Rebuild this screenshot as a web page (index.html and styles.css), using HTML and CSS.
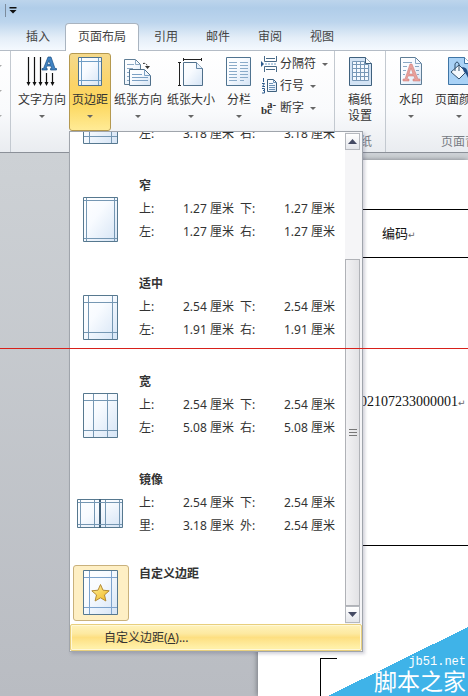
FILE: index.html
```
<!DOCTYPE html>
<html lang="zh-CN">
<head>
    <meta charset="UTF-8">
    <meta name="viewport" content="width=device-width, initial-scale=1.0">
    <title>页面布局</title>
    <link rel="stylesheet" href="styles.css">
</head>
<body>
    <svg class="defs" width="0" height="0" aria-hidden="true">
        <defs>
            <linearGradient id="paper" x1="0" y1="0" x2="1" y2="1">
                <stop offset="0" stop-color="#ffffff"/>
                <stop offset="0.4" stop-color="#f8fbff"/>
                <stop offset="1" stop-color="#d5e4f5"/>
            </linearGradient>
            <linearGradient id="star" x1="0" y1="0" x2="1" y2="1">
                <stop offset="0" stop-color="#fff3a0"/>
                <stop offset="1" stop-color="#f0b51c"/>
            </linearGradient>
        </defs>
    </svg>

    <header class="titlebar">
        <div class="quick-access">
            <button class="quick-more" type="button" aria-label="自定义快速访问工具栏">
                <svg width="8" height="8" viewBox="0 0 8 8"><path d="M0.5 0h7v1.5h-7zM0.5 3h7L4 6.5z" fill="#111"/></svg>
            </button>
        </div>
        <nav class="tabs">
            <a href="#" class="tab">插入</a>
            <a href="#" class="tab active">页面布局</a>
            <a href="#" class="tab">引用</a>
            <a href="#" class="tab">邮件</a>
            <a href="#" class="tab">审阅</a>
            <a href="#" class="tab">视图</a>
        </nav>
    </header>

    <section class="ribbon">
        <div class="group themes">
            <span class="arrow"></span>
            <span class="arrow"></span>
            <span class="arrow"></span>
        </div>

        <div class="group page-setup">
            <div class="tools">
                <button class="tool" type="button">
                    <svg width="32" height="32" viewBox="0 0 32 32">
                        <path d="M2.500 1v27M8.500 1v27M14.500 1v27M20.500 17v11M26.500 17v11" stroke="#111" stroke-width="1.200"/>
                        <path d="M.5 26h4l-2 4zM6.500 26h4l-2 4zM12.500 26h4l-2 4zM18.500 26h4l-2 4zM24.500 26h4l-2 4z" fill="#111"/>
                        <path d="M22 1h3l4 11.500h1.500V14h-6v-1.500h1.200l-.8-2.500h-4l-.9 2.500h1.200V14H16v-1.500h1.500zM22.900 4.500l-1.500 4h3z" fill="#3f83c4" stroke="#1b4f82" stroke-width=".7"/>
                    </svg>
                    <span>文字方向</span>
                    <span class="arrow"></span>
                </button>
                <div class="dropdown">
                    <button class="tool narrow open" type="button" aria-expanded="true">
                        <svg width="32" height="32" viewBox="0 0 32 32">
                            <path d="M4.500 1.500h23v28h-23z" fill="url(#paper)" stroke="#4f7390"/>
                            <path d="M7.500 2v27M24.500 2v27M5 5.500h22M5 24.500h22" stroke="#6f9ec6"/>
                        </svg>
                        <span>页边距</span>
                        <span class="arrow"></span>
                    </button>

                    <div class="menu">
                        <div class="gallery">
                            <div class="presets">
                                <button class="preset partial" type="button">
                                    <span class="thumb">
                                        <svg width="36" height="46" viewBox="0 0 36 46">
                                            <path d="M.5.5h34v44H.5z" fill="url(#paper)" stroke="#56788f"/>
                                            <path d="M6.500 1v43M28.500 1v43M1 7.500h33M1 37.500h33" stroke="#7597b3"/>
                                        </svg>
                                    </span>
                                    <span class="info">
                                        <span>左:</span><span>3.18 厘米</span><span>右:</span><span>3.18 厘米</span>
                                    </span>
                                </button>
                                <button class="preset" type="button">
                                    <span class="thumb">
                                        <svg width="36" height="46" viewBox="0 0 36 46">
                                            <path d="M.5.5h34v44H.5z" fill="url(#paper)" stroke="#56788f"/>
                                            <path d="M3.500 1v43M31.500 1v43M1 3.500h33M1 41.500h33" stroke="#7597b3"/>
                                        </svg>
                                    </span>
                                    <span class="info">
                                        <strong>窄</strong>
                                        <span>上:</span><span>1.27 厘米</span><span>下:</span><span>1.27 厘米</span>
                                        <span>左:</span><span>1.27 厘米</span><span>右:</span><span>1.27 厘米</span>
                                    </span>
                                </button>
                                <button class="preset" type="button">
                                    <span class="thumb">
                                        <svg width="36" height="46" viewBox="0 0 36 46">
                                            <path d="M.5.5h34v44H.5z" fill="url(#paper)" stroke="#56788f"/>
                                            <path d="M5.500 1v43M29.500 1v43M1 7.500h33M1 37.500h33" stroke="#7597b3"/>
                                        </svg>
                                    </span>
                                    <span class="info">
                                        <strong>适中</strong>
                                        <span>上:</span><span>2.54 厘米</span><span>下:</span><span>2.54 厘米</span>
                                        <span>左:</span><span>1.91 厘米</span><span>右:</span><span>1.91 厘米</span>
                                    </span>
                                </button>
                                <button class="preset" type="button">
                                    <span class="thumb">
                                        <svg width="36" height="46" viewBox="0 0 36 46">
                                            <path d="M.5.5h34v44H.5z" fill="url(#paper)" stroke="#56788f"/>
                                            <path d="M10.500 1v43M24.500 1v43M1 7.500h33M1 37.500h33" stroke="#7597b3"/>
                                        </svg>
                                    </span>
                                    <span class="info">
                                        <strong>宽</strong>
                                        <span>上:</span><span>2.54 厘米</span><span>下:</span><span>2.54 厘米</span>
                                        <span>左:</span><span>5.08 厘米</span><span>右:</span><span>5.08 厘米</span>
                                    </span>
                                </button>
                                <button class="preset mirror" type="button">
                                    <span class="thumb">
                                        <svg width="48" height="30" viewBox="1 0 48 30">
                                            <path d="M1.500.5h22v28h-22zM24.500.5h22v28h-22z" fill="url(#paper)" stroke="#56788f"/>
                                            <path d="M24 0v29" stroke="#3f5f78" stroke-width="2"/>
                                            <path d="M4.500 1v27M18.500 1v27M29.500 1v27M43.500 1v27M2 3.500h44M2 25.500h44" stroke="#7597b3"/>
                                        </svg>
                                    </span>
                                    <span class="info">
                                        <strong>镜像</strong>
                                        <span>上:</span><span>2.54 厘米</span><span>下:</span><span>2.54 厘米</span>
                                        <span>里:</span><span>3.18 厘米</span><span>外:</span><span>2.54 厘米</span>
                                    </span>
                                </button>
                                <button class="preset custom" type="button">
                                    <span class="thumb">
                                        <svg width="36" height="46" viewBox="0 0 36 46">
                                            <path d="M.5.5h34v44H.5z" fill="url(#paper)" stroke="#56788f"/>
                                            <path d="M6.500 1v43M28.500 1v43M1 7.500h33M1 37.500h33" stroke="#7da3cc"/>
                                            <path d="M17.500 14.500l2.500 5.700 6.200.6-4.700 4.100 1.400 6.100-5.400-3.200-5.400 3.200 1.400-6.100-4.700-4.100 6.200-.6z" fill="url(#star)" stroke="#b38a35"/>
                                        </svg>
                                    </span>
                                    <span class="info"><strong>自定义边距</strong></span>
                                </button>
                            </div>
                            <div class="scrollbar">
                                <button class="scroll-btn" type="button" aria-label="向上滚动"><svg width="9" height="5" viewBox="0 0 9 5"><path d="M0 5h9L4.500 0z" fill="#444a63"/></svg></button>
                                <div class="track"><div class="grip"><i></i><i></i><i></i></div></div>
                                <button class="scroll-btn" type="button" aria-label="向下滚动"><svg width="9" height="5" viewBox="0 0 9 5"><path d="M0 0h9L4.500 5z" fill="#444a63"/></svg></button>
                            </div>
                        </div>
                        <button class="menu-item" type="button">自定义边距(<u>A</u>)...</button>
                    </div>
                </div>
                <button class="tool" type="button">
                    <svg width="32" height="32" viewBox="0 0 32 32">
                        <path d="M2.500 3.500h11l5 5v20h-16z" fill="url(#paper)" stroke="#5f7d95"/>
                        <path d="M13.500 3.500v5h5M5 8.500h7M5 12.500h6M5 16.500h3M5 20.500h3M5 24.500h3" fill="none" stroke="#8aa8c4"/>
                        <path d="M7.500 13.500h15l6 6v10h-21z" fill="url(#paper)" stroke="#4f6f8a"/>
                        <path d="M22.500 13.500v6h6M10 18.500h10M10 21.500h16M10 24.500h16" fill="none" stroke="#7ba0c4"/>
                        <path d="M21 7.500q4-1 4.500 4" fill="none" stroke="#333" stroke-dasharray="2 1"/>
                        <path d="M23 10h5l-2.500 3z" fill="#333"/>
                    </svg>
                    <span>纸张方向</span>
                    <span class="arrow"></span>
                </button>
                <button class="tool" type="button">
                    <svg width="32" height="32" viewBox="0 0 32 32">
                        <path d="M8.500 6.500h13l6 6v17h-19z" fill="url(#paper)" stroke="#4f6f8a"/>
                        <path d="M21.500 6.500v6h6" fill="#e8f1fb" stroke="#6285a5"/>
                        <path d="M8 3.500h19M8.500 2v3M26.500 2v3M4.500 7v22M3 6.500h3M3 29.500h3" stroke="#222"/>
                    </svg>
                    <span>纸张大小</span>
                    <span class="arrow"></span>
                </button>
                <button class="tool narrow" type="button">
                    <svg width="32" height="32" viewBox="0 0 32 32">
                        <path d="M3.500 1.500h24v28h-24z" fill="url(#paper)" stroke="#4f7390"/>
                        <path d="M6 6.500h8M6 9.500h8M6 12.500h8M6 15.500h8M6 18.500h8M6 21.500h8M6 24.500h8M17 6.500h8M17 9.500h8M17 12.500h8M17 15.500h8M17 18.500h8M17 21.500h8M17 24.500h4" stroke="#8aabc9"/>
                    </svg>
                    <span>分栏</span>
                    <span class="arrow"></span>
                </button>
                <div class="small-tools">
                    <button class="small-tool" type="button">
                        <svg width="16" height="16" viewBox="0 0 16 16">
                            <path d="M0 5l3 3-3 3z" fill="#2c5a8c"/>
                            <path d="M3.500 0v5.500h12V0M3.500 16v-5.500h12V16M5 2.500h9M5 13.500h9" fill="none" stroke="#496b88"/>
                            <path d="M4 8h12" stroke="#6f9ec6" stroke-dasharray="2 1"/>
                        </svg>
                        <span>分隔符</span><span class="arrow"></span>
                    </button>
                    <button class="small-tool" type="button">
                        <svg width="16" height="16" viewBox="0 0 16 16">
                            <path d="M6.500 1.500h6l3 3v9h-9z" fill="url(#paper)" stroke="#3f617e"/>
                            <path d="M12.500 1.500v3h3M8 5.500h4M8 7.500h6M8 9.500h6M8 11.500h6" fill="none" stroke="#6b91b5"/>
                            <path d="M2.500 0v4M1 5.500h2.500l-2 3h2.500M1 10.500h2.500v2H2M3.500 12.500v2.500H1" fill="none" stroke="#2c5a8c"/>
                        </svg>
                        <span>行号</span><span class="arrow"></span>
                    </button>
                    <button class="small-tool" type="button">
                        <svg class="hyphen" width="16" height="16" viewBox="0 0 16 16"><text x="0" y="14">bc</text><text x="6" y="8">a-</text></svg>
                        <span>断字</span><span class="arrow"></span>
                    </button>
                </div>
            </div>
        </div>

        <div class="group manuscript">
            <div class="tools">
                <button class="tool narrow" type="button">
                    <svg width="32" height="32" viewBox="0 0 32 32">
                        <path d="M5.500 1.500h16l6 6v22h-22z" fill="#d3e3f4" stroke="#3f617e"/>
                        <path d="M8.500 5.500h12v3h4v16h-16zM8 8.500h16M8 12.500h16M8 16.500h16M8 20.500h16M12.500 6v19M16.500 6v19M20.500 6v19" fill="#f4f9ff" stroke="#7898b7"/>
                        <path d="M21.500 1.500v6h6" fill="#fff" stroke="#3f617e"/>
                    </svg>
                    <span>稿纸<br>设置</span>
                </button>
            </div>
            <div class="group-label">稿纸</div>
        </div>

        <div class="group background">
            <div class="tools">
                <button class="tool narrow" type="button">
                    <svg width="32" height="32" viewBox="0 0 32 32">
                        <path d="M5.500 1.500h15l6 6v21h-21z" fill="url(#paper)" stroke="#5f7d95"/>
                        <path d="M20.500 1.500v6h6M8 6.500h9M8 10.500h4M20 10.500h4M8 14.500h3M21 14.500h3M8 18.500h2M22 18.500h2" fill="none" stroke="#8aa8c4"/>
                        <path d="M15 8h2l6 15h2v2h-7v-2h2l-1-3h-6l-1 3h2v2H8v-2h2zM16 12l-2 6h4z" fill="#e8a09b" stroke="#cf7670" stroke-width=".5"/>
                    </svg>
                    <span>水印</span>
                    <span class="arrow"></span>
                </button>
                <button class="tool" type="button">
                    <svg width="32" height="32" viewBox="0 0 32 32">
                        <path d="M5.500 1.500h16l6 6v21h-22z" fill="#a9d2f6" stroke="#3f75a5"/>
                        <path d="M21.500 1.500v6h6" fill="#fff" stroke="#3f75a5"/>
                        <path d="M8 16l8-7 7 7-7 7z" fill="#f4f8fc" stroke="#31506d"/>
                        <path d="M12 15V8q2-4 4 0v7" fill="none" stroke="#31506d"/>
                        <path d="M19 11q7 0 6 11-2-5-4-6z" fill="#234f86"/>
                    </svg>
                    <span>页面颜色</span>
                    <span class="arrow"></span>
                </button>
            </div>
            <div class="group-label">页面背景</div>
        </div>
    </section>

    <main class="workspace">
        <article class="page">
            <div class="page-row heading">编码<span class="mark">↵</span></div>
            <div class="page-row number">02107233000001<span class="mark">↵</span></div>
            <div class="frame"></div>
        </article>
    </main>

    <div class="red-line"></div>
    <div class="watermark">
        <span class="site">jb51.net</span>
        <span class="site-name">脚本之家</span>
    </div>
</body>
</html>
```
FILE: styles.css
```
* {
    box-sizing: border-box;
}

body {
    margin: 0;
    min-height: 100vh;
    position: relative;
    display: flex;
    flex-direction: column;
    overflow: hidden;
    font-family: "Noto Sans", "Noto Sans CJK SC", sans-serif;
    font-size: 12px;
    line-height: 16px;
    color: #333;
}

button {
    margin: 0;
    padding: 0;
    border: 1px solid transparent;
    background: none;
    font: inherit;
    color: inherit;
    text-align: left;
    cursor: pointer;
}

svg {
    display: block;
    flex-shrink: 0;
}

.defs {
    position: absolute;
}

.arrow {
    width: 0;
    border: 3px solid transparent;
    border-top-color: #666;
    border-bottom: 0;
}

/* Title bar and tabs */
.titlebar {
    background: linear-gradient(#bdd5ec 0, #b0cde9 8px, #bcd5ed 22px, #e4eef8 38px, #f6faff 51px);
}

.quick-access {
    height: 23px;
    padding: 4px 0 0 5px;
}

.quick-more {
    height: 13px;
    padding: 0 0 0 3px;
    border: 0;
    border-left: 1px solid #7c8c9d;
}

.tabs {
    display: flex;
    height: 28px;
    padding-left: 12px;
    border-bottom: 1px solid #b4bcc6;
}

.tab {
    height: 27px;
    padding: 0 14px;
    line-height: 27px;
    color: #444;
    text-decoration: none;
    white-space: nowrap;
}

.tab.active {
    height: 28px;
    margin: 0 1px;
    padding: 0 12px;
    border: 1px solid #a9b4c0;
    border-bottom: 0;
    border-radius: 4px 4px 0 0;
    background: #fff;
    line-height: 26px;
}

/* Ribbon */
.ribbon {
    display: flex;
    height: 102px;
    border-bottom: 1px solid #8b9098;
    background: linear-gradient(#fff, #f9fafc 60%, #e9ecf0);
}

.group {
    display: flex;
    flex-direction: column;
    flex-shrink: 0;
    border-right: 1px solid #c3c9d0;
}

.themes {
    width: 11px;
    padding: 14px 0 0;
    gap: 22px;
    overflow: hidden;
}

.themes .arrow {
    margin-left: -4px;
    border-top-color: #aaa;
}

.page-setup {
    padding: 0 5px;
    width: 324px;
}

.manuscript {
    padding: 0 4px;
}

.background {
    flex: 1;
    min-width: 0;
    padding: 0 4px;
    border-right: 0;
    overflow: hidden;
}

.background .group-label {
    padding-left: 51px;
    text-align: left;
    white-space: nowrap;
}

.tools {
    display: flex;
    gap: 1px;
    height: 81px;
    padding-top: 2px;
}

.group-label {
    text-align: center;
    line-height: 20px;
    color: #777b83;
}

.tool {
    display: flex;
    flex-direction: column;
    flex-shrink: 0;
    align-items: center;
    width: 52px;
    height: 78px;
    padding-top: 2px;
    white-space: nowrap;
}

.tool.narrow {
    width: 42px;
}

.tool span {
    margin-top: 4px;
}

.tool .arrow {
    margin-top: 7px;
}

.tool.open {
    border-color: #b5994f;
    border-radius: 3px;
    background: linear-gradient(#f5d98b, #fbd468 40%, #fcd75e 65%, #ffeb96);
}

.small-tools {
    display: flex;
    flex-direction: column;
    gap: 6px;
    padding-top: 3px;
}

.small-tool {
    display: flex;
    align-items: center;
    gap: 3px;
    height: 16px;
    border: 0;
    white-space: nowrap;
}

.small-tool .arrow {
    margin-left: 3px;
}

.hyphen {
    font-family: "Liberation Serif", serif;
    font-size: 11px;
    font-weight: bold;
    fill: #333;
}

/* Margin menu */
.dropdown {
    position: relative;
}

.menu {
    position: absolute;
    z-index: 10;
    top: 78px;
    left: 0;
    width: 294px;
    border: 1px solid #a0a5ac;
    background: #fff;
    box-shadow: 2px 2px 3px rgba(80, 80, 110, 0.25);
}

.gallery {
    display: flex;
    height: 492px;
}

.presets {
    display: flex;
    flex: 1;
    flex-direction: column;
    justify-content: flex-end;
    overflow: hidden;
}

.preset {
    display: flex;
    align-items: flex-start;
    flex-shrink: 0;
    gap: 10px;
    padding: 0 0 24px 3px;
    border: 0;
}

.preset.partial .info {
    padding-top: 46px;
}

.preset.mirror {
    padding-bottom: 20px;
}

.preset.custom {
    padding-bottom: 3px;
}

.thumb {
    display: flex;
    align-items: center;
    justify-content: center;
    width: 56px;
    height: 56px;
    margin-top: 18px;
    border: 1px solid transparent;
    border-radius: 3px;
}

.custom .thumb {
    margin-top: 3px;
    border-color: #c9b17c;
    background: #feefc4;
}

.info {
    display: grid;
    grid-template-columns: 44px 57px 44px auto;
    line-height: 23px;
    white-space: nowrap;
}

.info strong {
    grid-column: 1 / -1;
}

.scrollbar {
    display: flex;
    flex-direction: column;
    width: 17px;
    padding: 1px 2px 1px 0;
    background: #f5f5f7;
}

.scroll-btn {
    display: flex;
    align-items: center;
    justify-content: center;
    height: 17px;
    border-color: #b5b8be;
    background: linear-gradient(#fff, #e4e6eb);
}

.track {
    display: flex;
    flex: 1;
    align-items: flex-end;
}

.grip {
    display: flex;
    flex: 1;
    flex-direction: column;
    align-items: center;
    justify-content: center;
    gap: 2px;
    height: 76%;
    border: 1px solid #b0b2b7;
    background: linear-gradient(90deg, #f2f2f4, #e2e2e5);
}

.grip i {
    width: 8px;
    height: 1px;
    background: #777;
}

.menu-item {
    display: block;
    width: 100%;
    height: 27px;
    padding-left: 33px;
    border: 1px solid #e8cf7d;
    border-radius: 2px;
    background: linear-gradient(#fff3bd, #fde9a0 35%, #fddf81 50%, #fff0a8 90%);
    box-shadow: inset 0 0 0 1px #fff8d8;
}

/* Document */
.workspace {
    display: flex;
    flex: 1;
    padding: 7px 0 0 258px;
    background: linear-gradient(#cdd1d5, #b9bcc2);
    overflow: hidden;
}

.page {
    flex: 1;
    background: #fff;
    box-shadow: -1px 0 5px #777b82;
    padding-top: 49px;
    color: #111;
    font-family: "Liberation Serif", "Noto Sans CJK SC", serif;
}

.page-row {
    border-top: 1px solid #000;
}

.heading {
    height: 48px;
    padding: 16px 0 0 124px;
    font-size: 13px;
}

.number {
    height: 289px;
    padding: 136px 0 0 102px;
    border-bottom: 1px solid #000;
    font-size: 14px;
}

.mark {
    color: #666;
    font-family: "DejaVu Sans", sans-serif;
    font-size: 9px;
}

.frame {
    width: 17px;
    height: 38px;
    margin: 112px 0 0 62px;
    border-top: 1px solid #000;
    border-left: 1px solid #000;
}

.red-line {
    position: absolute;
    z-index: 20;
    top: 348px;
    left: 0;
    right: 0;
    height: 1px;
    background: #d8201a;
}

.watermark {
    position: absolute;
    right: 0;
    bottom: 0;
    display: flex;
    flex-direction: column;
    align-items: flex-end;
    justify-content: flex-end;
    width: 140px;
    height: 69px;
    padding: 0 2px 2px 0;
    background: linear-gradient(to bottom right, transparent 50%, #3fb3e8 50%);
    color: #fff;
}

.site {
    font-family: "Liberation Mono", monospace;
    font-size: 12px;
    line-height: 14px;
}

.site-name {
    font-size: 23px;
    line-height: 25px;
}
```
